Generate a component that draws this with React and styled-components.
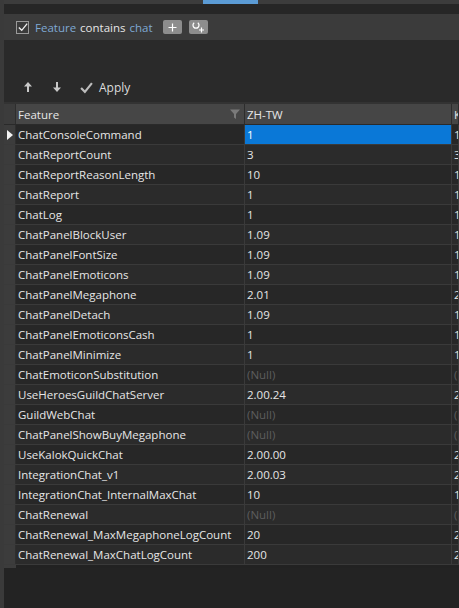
import React from 'react';
import styled, { createGlobalStyle } from 'styled-components';

const rows = [
  ['ChatConsoleCommand', '1', '1'],
  ['ChatReportCount', '3', '3'],
  ['ChatReportReasonLength', '10', '10'],
  ['ChatReport', '1', '1'],
  ['ChatLog', '1', '1'],
  ['ChatPanelBlockUser', '1.09', '1.09'],
  ['ChatPanelFontSize', '1.09', '1.09'],
  ['ChatPanelEmoticons', '1.09', '1.09'],
  ['ChatPanelMegaphone', '2.01', '2.01'],
  ['ChatPanelDetach', '1.09', '1.09'],
  ['ChatPanelEmoticonsCash', '1', '1'],
  ['ChatPanelMinimize', '1', '1'],
  ['ChatEmoticonSubstitution', null, null],
  ['UseHeroesGuildChatServer', '2.00.24', '2.00.24'],
  ['GuildWebChat', null, null],
  ['ChatPanelShowBuyMegaphone', null, null],
  ['UseKalokQuickChat', '2.00.00', '2.00.00'],
  ['IntegrationChat_v1', '2.00.03', '2.00.03'],
  ['IntegrationChat_InternalMaxChat', '10', '10'],
  ['ChatRenewal', null, null],
  ['ChatRenewal_MaxMegaphoneLogCount', '20', '20'],
  ['ChatRenewal_MaxChatLogCount', '200', '200'],
];

const GlobalStyle = createGlobalStyle`
  body {
    margin: 0;
    background: #232323;
    font-family: "Open Sans", "Noto Sans", sans-serif;
    color: #e2e2e2;
  }
`

const Window = styled.div`
  display: flex;
  flex-direction: column;
  width: 459px;
  height: 608px;
  overflow: hidden;
  background: #232323;
  border-left: 4px solid #3a3a3a;
  box-sizing: border-box;
`

const TabStrip = styled.div`
  display: flex;
  height: 4px;
  background: #3c3c3c;
  padding-left: 199px;
`

const ActiveTab = styled.div`
  width: 55px;
  background: #5b9bd5;
`

const Spacer = styled.div`
  height: 10px;
  background: #262626;
`

const FilterBar = styled.div`
  display: flex;
  align-items: center;
  height: 26px;
  padding-left: 12px;
  background: #3b3b3b;
  font-size: 11.5px;
`

const CheckBox = styled.span`
  display: flex;
  align-items: center;
  justify-content: center;
  width: 11px;
  height: 11px;
  border: 1px solid #9a9a9a;
  margin-right: 6px;
`

const Word = styled.span`
  color: ${p => (p.$accent ? '#7fa9d4' : '#e6e6e6')};
  margin-right: 4px;
`

const SmallButton = styled.span`
  display: flex;
  align-items: center;
  justify-content: center;
  width: 19px;
  height: 14px;
  margin-left: ${p => p.$gap}px;
  background: #8d8d8d;
  border-radius: 2px;
`

const ToolArea = styled.div`
  display: flex;
  align-items: flex-end;
  height: 62px;
  padding: 0 0 6px 12px;
  box-sizing: border-box;
  background: #2a2a2a;
`

const ToolButton = styled.span`
  display: flex;
  align-items: center;
  height: 18px;
  padding: 0 ${p => p.$pad || 8}px;
  font-size: 12px;
  color: #dcdcdc;
`

const Grid = styled.div`
  display: flex;
  flex-direction: column;
  border-top: 2px solid #333;
  background: #222;
`

const Row = styled.div`
  display: grid;
  grid-template-columns: 12px 229px 207px 1fr;
  height: 20px;
  border-bottom: 1px solid #3a3a3a;
  box-sizing: border-box;
  background: ${p => (p.$alt ? '#2b2b2b' : '#272727')};
`

const HeaderRow = styled(Row)`
  height: 21px;
  background: #3a3a3a;
  border-bottom: 1px solid #2a2a2a;
`

const RowHead = styled.div`
  display: flex;
  align-items: center;
  justify-content: center;
  background: #3c3c3c;
  border-right: 1px solid #2e2e2e;
`

const HeadCell = styled.div`
  display: flex;
  align-items: center;
  justify-content: space-between;
  padding: 0 4px 0 2px;
  background: #464646;
  border-right: 1px solid #2d2d2d;
  font-size: 11.5px;
  color: #e6e6e6;
  overflow: hidden;
  white-space: nowrap;
`

const Cell = styled.div`
  display: flex;
  align-items: center;
  padding-left: 2px;
  font-size: 11.5px;
  white-space: nowrap;
  overflow: hidden;
  border-right: 1px solid #3a3a3a;
  background: ${p => (p.$selected ? '#0a78d7' : 'transparent')};
  color: ${p => (p.$selected ? '#fff' : p.$null ? '#5e5e5e' : '#e6e6e6')};
`

const Filler = styled.div`
  display: flex;
  height: 3px;
`

const FillerHead = styled.div`
  width: 12px;
  background: #3c3c3c;
`

const Funnel = () => (
  <svg width="10" height="10" viewBox="0 0 10 10">
    <path d="M0 0.5 H10 L6 5 V10 L4 8.5 V5 Z" fill="#7a7a7a" />
  </svg>
);

const Arrow = ({ down }) => (
  <svg width="8" height="10" viewBox="0 0 8 10" style={down ? { transform: 'rotate(180deg)' } : undefined}>
    <path d="M4 0 L8 4.5 H5 V10 H3 V4.5 H0 Z" fill="#c8c8c8" />
  </svg>
);

const Check = ({ size = 12, color = '#bdbdbd', width = 2 }) => (
  <svg width={size} height={size} viewBox="0 0 12 12">
    <path d="M1 6.5 L4.5 10 L11 2" fill="none" stroke={color} strokeWidth={width} />
  </svg>
);

const App = () => (
  <Window>
    <GlobalStyle />
    <TabStrip>
      <ActiveTab />
    </TabStrip>
    <Spacer />
    <FilterBar>
      <CheckBox>
        <Check size={10} color="#f0f0f0" width={1.6} />
      </CheckBox>
      <Word $accent>Feature</Word>
      <Word>contains</Word>
      <Word $accent>chat</Word>
      <SmallButton $gap={6}>
        <svg width="9" height="9" viewBox="0 0 9 9">
          <path d="M4.5 0.5 V8.5 M0.5 4.5 H8.5" stroke="#fff" strokeWidth="1.2" />
        </svg>
      </SmallButton>
      <SmallButton $gap={7}>
        <svg width="14" height="12" viewBox="0 0 14 12">
          <path d="M3.2 1.8 A3 3 0 1 0 6.8 1.8" fill="none" stroke="#fff" strokeWidth="1.3" />
          <path d="M10.5 6.5 V11.5 M8 9 H13" stroke="#fff" strokeWidth="1.2" />
        </svg>
      </SmallButton>
    </FilterBar>
    <ToolArea>
      <ToolButton>
        <Arrow />
      </ToolButton>
      <ToolButton $pad={13}>
        <Arrow down />
      </ToolButton>
      <ToolButton $pad={6}>
        <Check size={13} />
        <span style={{ marginLeft: 6 }}>Apply</span>
      </ToolButton>
    </ToolArea>
    <Grid>
      <HeaderRow>
        <RowHead />
        <HeadCell>
          Feature
          <Funnel />
        </HeadCell>
        <HeadCell>ZH-TW</HeadCell>
        <HeadCell>KO-KR</HeadCell>
      </HeaderRow>
      {rows.map(([name, value, other], i) => (
        <Row key={name} $alt={i % 2 === 1}>
          <RowHead>
            {i === 0 && (
              <svg width="6" height="10" viewBox="0 0 6 10">
                <path d="M0 0 L6 5 L0 10 Z" fill="#f2f2f2" />
              </svg>
            )}
          </RowHead>
          <Cell>{name}</Cell>
          <Cell $selected={i === 0} $null={value === null}>
            {value === null ? '(Null)' : value}
          </Cell>
          <Cell $null={other === null}>{other === null ? '(Null)' : other}</Cell>
        </Row>
      ))}
      <Filler>
        <FillerHead />
      </Filler>
    </Grid>
  </Window>
);

export default App;
